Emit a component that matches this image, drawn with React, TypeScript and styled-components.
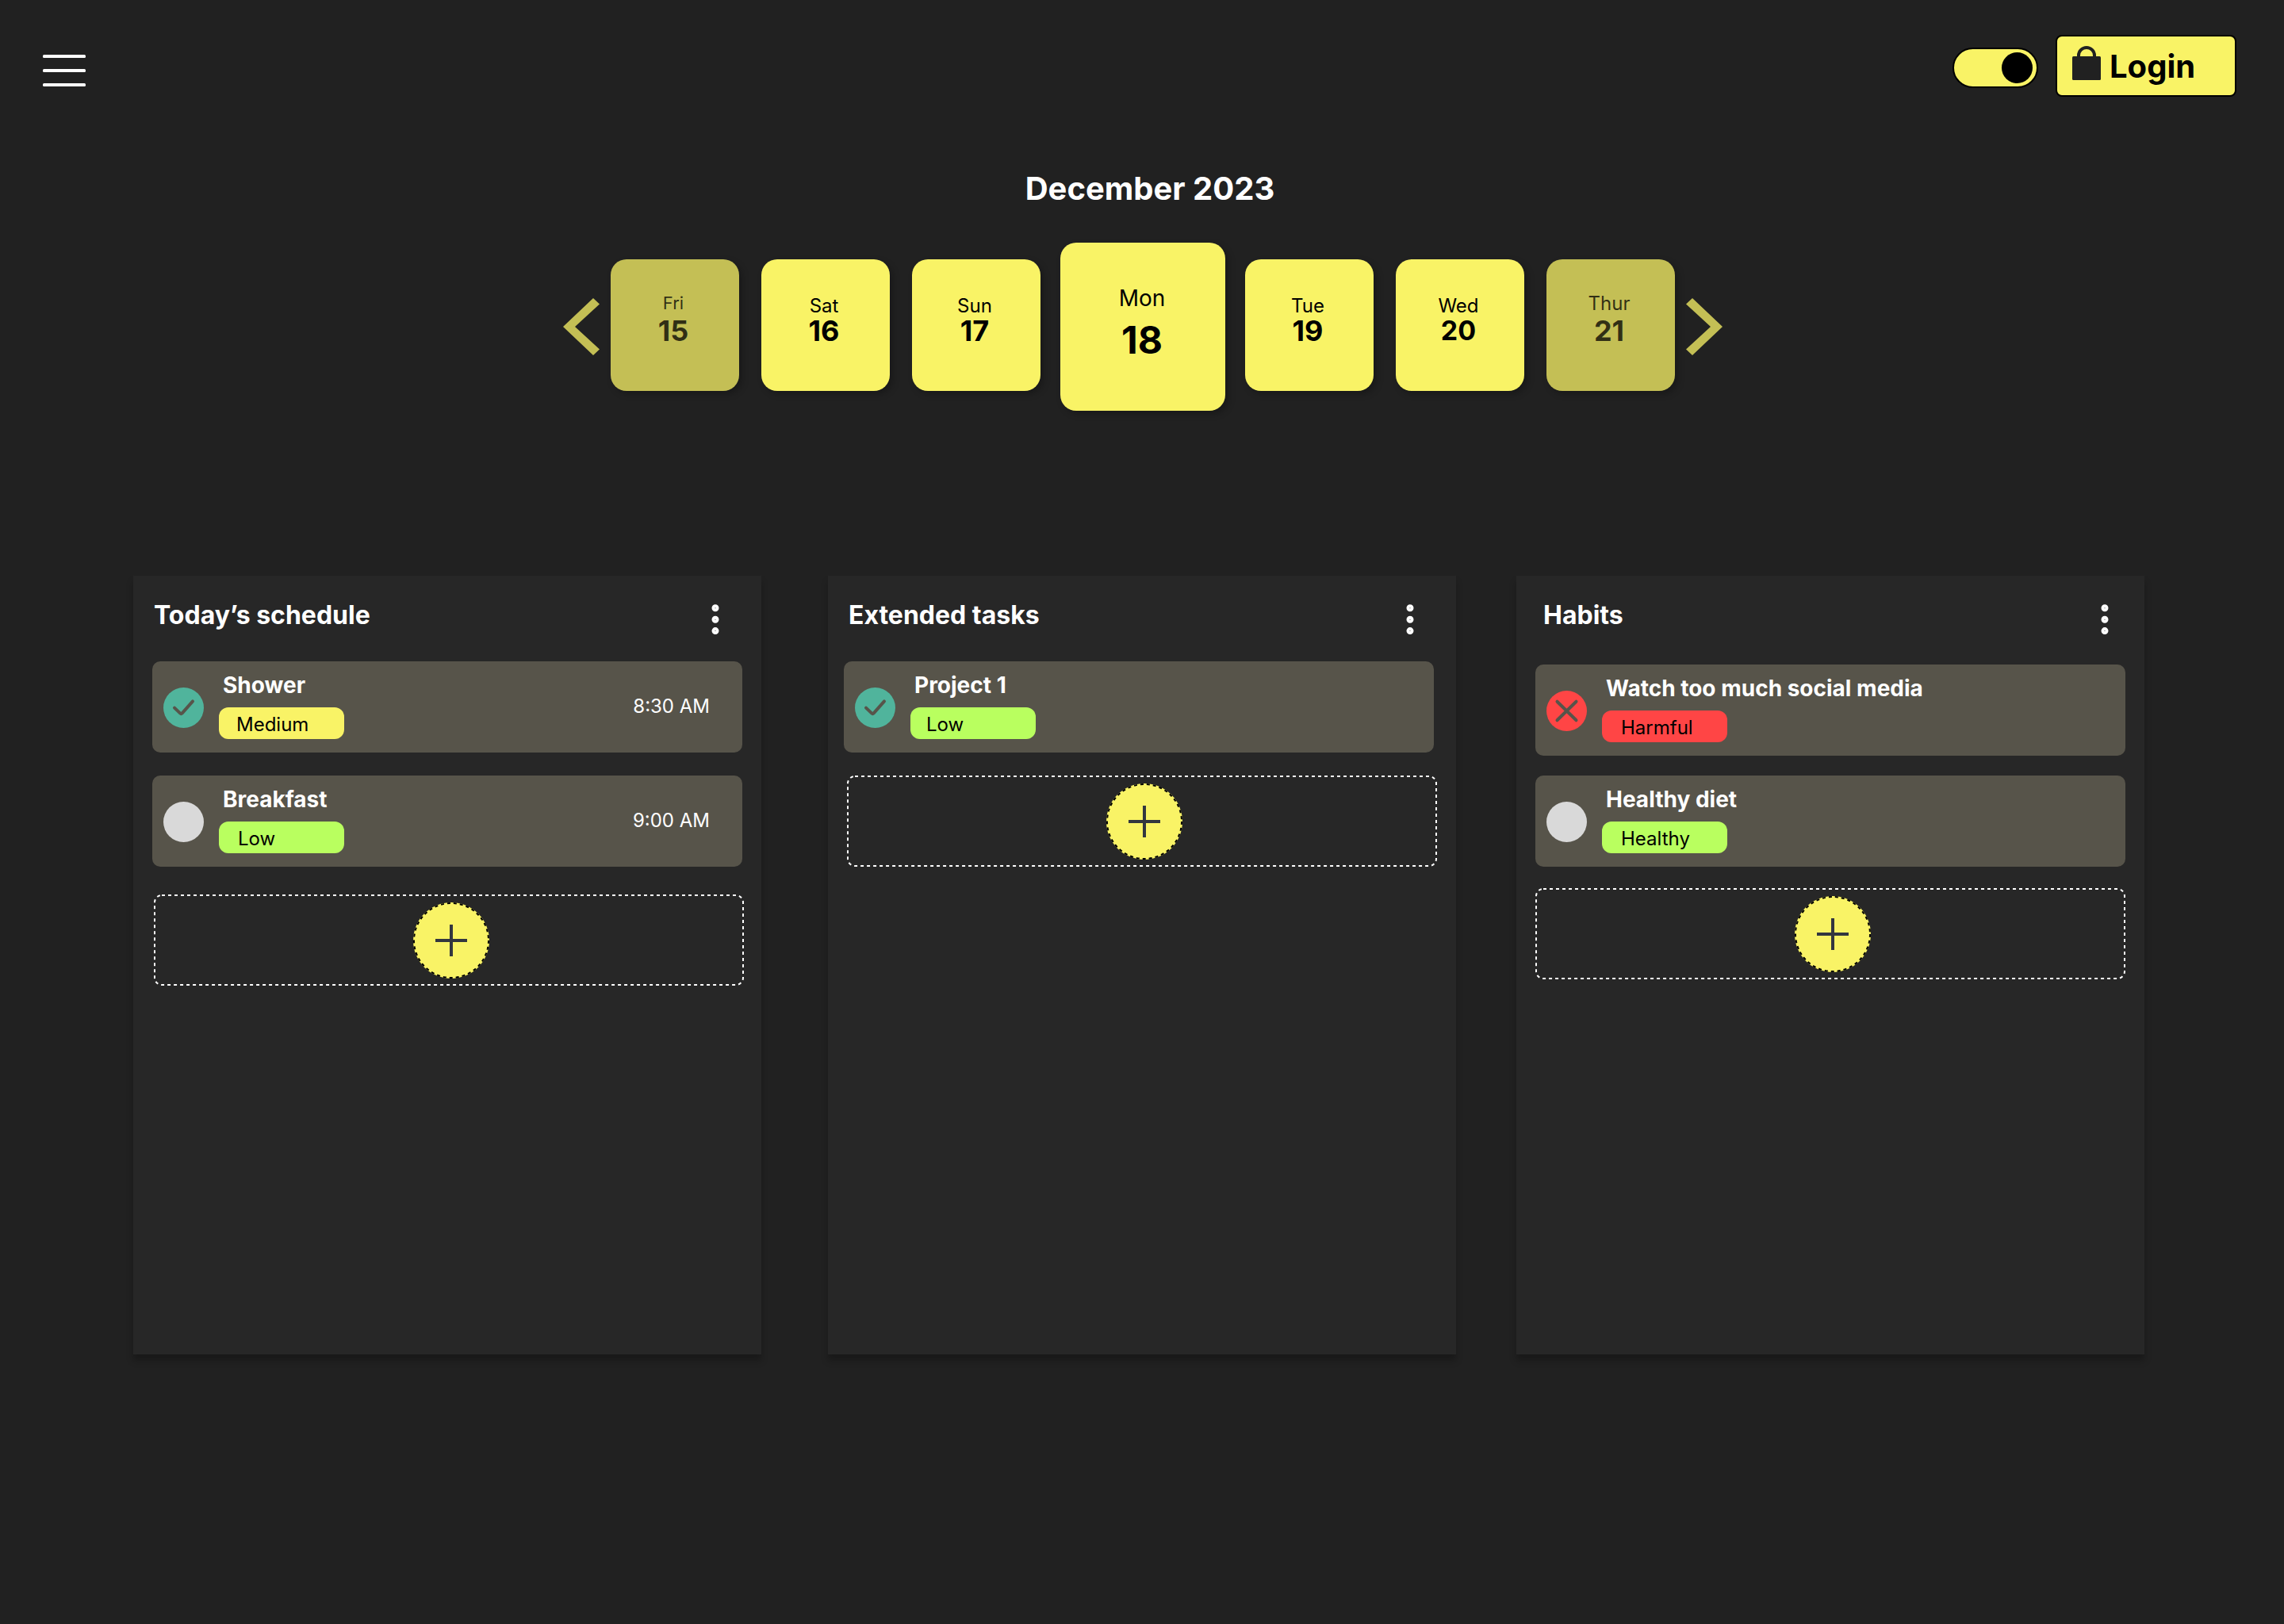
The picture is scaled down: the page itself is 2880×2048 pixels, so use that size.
import React, { useState } from "react";
import styled, { createGlobalStyle, css } from "styled-components";

const color = {
  page: "#212121",
  panel: "#272727",
  row: "#57544a",
  yellow: "#f9f366",
  mutedYellow: "#c4bf55",
  green: "#b9ff5f",
  red: "#ff4545",
  teal: "#50b49c",
  idle: "#d9d9d9",
  white: "#ffffff",
  black: "#000000",
  plus: "#33363f",
};

const GlobalStyle = createGlobalStyle`
  *, *::before, *::after { box-sizing: border-box; }
  body {
    margin: 0;
    background: ${color.page};
    color: ${color.white};
    font-family: Inter, "Liberation Sans", sans-serif;
  }
  button, input { font: inherit; }
  h1, h2, h3, p, ul { margin: 0; padding: 0; }
`;

const Page = styled.div`
  display: flex;
  flex-direction: column;
  min-height: 100vh;
  padding-bottom: 340px;
`;

const PlainButton = styled.button`
  display: flex;
  padding: 0;
  border: 0;
  background: none;
  color: inherit;
  cursor: pointer;
`;

/* ---------- top bar ---------- */

const TopBar = styled.header`
  display: flex;
  align-items: flex-start;
  justify-content: space-between;
  padding: 44px 60px 0 54px;
`;

const MenuButton = styled(PlainButton)`
  margin-top: 25px;
`;

const Actions = styled.div`
  display: flex;
  align-items: flex-start;
  gap: 22px;
`;

const Switch = styled.input`
  appearance: none;
  display: flex;
  align-items: center;
  width: 108px;
  height: 51px;
  margin: 16px 0 0;
  padding: 0 5px;
  border: 2px solid ${color.black};
  border-radius: 26px;
  background: ${color.yellow};
  cursor: pointer;

  &::before {
    content: "";
    width: 39px;
    height: 39px;
    border-radius: 50%;
    background: ${color.black};
  }

  &:checked {
    justify-content: flex-end;
  }
`;

const LoginButton = styled.button`
  display: flex;
  align-items: center;
  gap: 11px;
  width: 228px;
  height: 78px;
  padding: 2px 19px 0;
  border: 2px solid ${color.black};
  border-radius: 8px;
  background: ${color.yellow};
  color: ${color.black};
  font-size: 40px;
  font-weight: 700;
  line-height: 48px;
  cursor: pointer;

  svg {
    margin-bottom: 10px;
  }
`;

/* ---------- calendar ---------- */

const Calendar = styled.section`
  display: flex;
  flex-direction: column;
  align-items: center;
  gap: 44px;
  margin-top: 92px;
`;

const Month = styled.h1`
  padding-left: 20px;
  font-size: 40px;
  font-weight: 700;
  line-height: 48px;
`;

const Week = styled.div`
  display: flex;
  align-items: center;
  gap: 14px;
  padding-left: 2px;
`;

const Days = styled.div`
  display: flex;
  align-items: center;
  gap: 28px;
`;

const DayName = styled.span<{ $small?: boolean }>`
  font-size: ${(p) => (p.$small ? 22 : 24)}px;
  line-height: 29px;
`;

const DayNumber = styled.span<{ $small?: boolean }>`
  font-size: ${(p) => (p.$small ? 34 : 36)}px;
  font-weight: 700;
  line-height: 34px;
`;

type DayKind = "normal" | "muted" | "selected";

const DayCard = styled.button<{ $kind: DayKind }>`
  display: flex;
  flex-direction: column;
  align-items: center;
  justify-content: flex-start;
  width: 162px;
  height: 166px;
  margin: 0 0 4px;
  padding: 44px 4px 0 0;
  border: 0;
  border-radius: 20px;
  background: ${color.yellow};
  color: ${color.black};
  box-shadow: 4px 4px 8px rgba(0, 0, 0, 0.25);
  cursor: pointer;

  ${(p) =>
    p.$kind === "muted" &&
    css`
      gap: 3px;
      padding-top: 41px;
      background: ${color.mutedYellow};
      color: rgba(0, 0, 0, 0.75);
    `}

  ${(p) =>
    p.$kind === "selected" &&
    css`
      gap: 7px;
      width: 208px;
      height: 212px;
      margin: 0 -3px;
      padding: 53px 2px 0 0;

      ${DayName} {
        font-size: 28px;
        line-height: 34px;
      }
      ${DayNumber} {
        font-size: 48px;
        line-height: 58px;
      }
    `}
`;

/* ---------- board ---------- */

const Board = styled.main`
  display: flex;
  flex: 1;
  margin: 208px 176px 0 168px;
`;

const PanelBox = styled.section`
  flex: 1 1 0;
  min-width: 0;
  background: ${color.panel};
  box-shadow: 0 8px 8px rgba(0, 0, 0, 0.25);

  & + & {
    margin-left: 84px;
  }
  & + &:last-child {
    margin-left: 76px;
  }
`;

const PanelHeader = styled.header<{ $left: number; $right: number }>`
  display: flex;
  align-items: flex-start;
  justify-content: space-between;
  height: 108px;
  padding: 31px ${(p) => p.$right}px 0 ${(p) => p.$left}px;
`;

const PanelTitle = styled.h2`
  font-size: 32px;
  font-weight: 700;
  line-height: 38px;
`;

const KebabButton = styled(PlainButton)`
  margin-top: 4px;
`;

const List = styled.ul<{ $top: number; $gap: number; $left: number; $right: number }>`
  display: flex;
  flex-direction: column;
  gap: ${(p) => p.$gap}px;
  padding: ${(p) => p.$top}px ${(p) => p.$right}px 0 ${(p) => p.$left}px;
  list-style: none;
`;

const Row = styled.li`
  display: flex;
  align-items: flex-start;
  padding: 13px 41px 17px 14px;
  border-radius: 10px;
  background: ${color.row};
`;

const Status = styled.label`
  display: grid;
  width: 51px;
  height: 51px;
  margin-top: 20px;
  place-items: center;
  cursor: pointer;

  > * {
    grid-area: 1 / 1;
  }
  svg {
    pointer-events: none;
  }
`;

const StatusInput = styled.input<{ $tone: string }>`
  appearance: none;
  width: 51px;
  height: 51px;
  margin: 0;
  border-radius: 50%;
  background: ${color.idle};
  cursor: pointer;

  &:checked {
    background: ${(p) => p.$tone};
  }
`;

const Details = styled.div`
  display: flex;
  flex: 1;
  flex-direction: column;
  align-items: flex-start;
  gap: 11px;
  padding-left: 19px;
`;

const TaskName = styled.h3`
  padding-left: 5px;
  font-size: 28px;
  font-weight: 700;
  line-height: 34px;
`;

const Badge = styled.span<{ $tone: string; $inset: number }>`
  width: 158px;
  height: 40px;
  padding: 3px 12px 0 ${(p) => p.$inset}px;
  border-radius: 12px;
  background: ${(p) => p.$tone};
  color: ${color.black};
  font-size: 24px;
  line-height: 37px;
`;

const Time = styled.time`
  margin-top: 29px;
  font-size: 24px;
  line-height: 30px;
`;

const AddSlot = styled.div<{ $top: number; $left: number; $right: number }>`
  padding: ${(p) => p.$top}px ${(p) => p.$right}px 0 ${(p) => p.$left}px;
`;

const AddButton = styled.button`
  position: relative;
  display: flex;
  align-items: center;
  justify-content: center;
  width: 100%;
  height: 115px;
  padding: 0 0 0 5px;
  border: 0;
  background: none;
  cursor: pointer;
`;

const DashedOutline = styled.svg`
  position: absolute;
  inset: 0;
  width: 100%;
  height: 100%;
  overflow: visible;

  rect {
    width: calc(100% - 2px);
    height: calc(100% - 2px);
  }
`;

/* ---------- drawings ---------- */

const MenuIcon = () => (
  <svg width="54" height="40" viewBox="0 0 54 40" fill={color.white} aria-hidden="true">
    <rect width="54" height="4" rx="1.5" />
    <rect y="18" width="54" height="4" rx="1.5" />
    <rect y="36" width="54" height="4" rx="1.5" />
  </svg>
);

const LockIcon = () => (
  <svg width="36" height="43" viewBox="0 0 36 43" aria-hidden="true">
    <path d="M8 15V12a10 10 0 0 1 20 0v3" fill="none" stroke={color.page} strokeWidth="4" />
    <rect y="13" width="36" height="30" rx="1.5" fill={color.page} />
  </svg>
);

const Chevron = ({ flip }: { flip?: boolean }) => (
  <svg width="46" height="72" viewBox="0 0 46 72" fill={color.mutedYellow} aria-hidden="true">
    <path
      d={flip ? "M46 36 8 72 0 64.6 31 36 0 7.4 8 0Z" : "M0 36 38 0 46 7.4 15 36 46 64.6 38 72Z"}
    />
  </svg>
);

const KebabIcon = () => (
  <svg width="10" height="40" viewBox="0 0 10 40" fill="none" stroke={color.white} strokeWidth="4" aria-hidden="true">
    <circle cx="5" cy="5.8" r="2.5" />
    <circle cx="5" cy="20.2" r="2.5" />
    <circle cx="5" cy="34.6" r="2.5" />
  </svg>
);

const markProps = {
  width: 51,
  height: 51,
  viewBox: "0 0 51 51",
  fill: "none",
  stroke: color.row,
  strokeWidth: 4,
  strokeLinecap: "round" as const,
  strokeLinejoin: "round" as const,
  "aria-hidden": true,
};

const CheckMark = () => (
  <svg {...markProps}>
    <path d="M14 25.6 21.3 32.6Q22.4 33.7 23.5 32.6L37 17.4" />
  </svg>
);

const CrossMark = () => (
  <svg {...markProps}>
    <path d="M13.5 13.7 37.5 37.3M37.5 13.7 13.5 37.3" />
  </svg>
);

const PlusBadge = () => (
  <svg width="98" height="98" viewBox="0 0 98 98" aria-hidden="true">
    <circle cx="49" cy="49" r="48" fill={color.yellow} />
    <circle cx="49" cy="49" r="47" fill="none" stroke={color.black} strokeWidth="2" strokeDasharray="4 4" />
    <path d="M29 49H69M49 29V69" stroke={color.plus} strokeWidth="4" />
  </svg>
);

/* ---------- data ---------- */

type Task = {
  name: string;
  level: string;
  tone: string;
  inset: number;
  state: "done" | "failed" | "open";
  time?: string;
};

type PanelData = {
  title: string;
  header: [number, number];
  list: { top: number; gap: number; left: number; right: number };
  add: { top: number; left: number; right: number };
  tasks: Task[];
};

const days: { name: string; number: number; kind: DayKind }[] = [
  { name: "Fri", number: 15, kind: "muted" },
  { name: "Sat", number: 16, kind: "normal" },
  { name: "Sun", number: 17, kind: "normal" },
  { name: "Mon", number: 18, kind: "selected" },
  { name: "Tue", number: 19, kind: "normal" },
  { name: "Wed", number: 20, kind: "normal" },
  { name: "Thur", number: 21, kind: "muted" },
];

const panels: PanelData[] = [
  {
    title: "Today’s schedule",
    header: [26, 53],
    list: { top: 0, gap: 29, left: 24, right: 24 },
    add: { top: 35, left: 26, right: 22 },
    tasks: [
      { name: "Shower", level: "Medium", tone: color.yellow, inset: 22, state: "done", time: "8:30 AM" },
      { name: "Breakfast", level: "Low", tone: color.green, inset: 24, state: "open", time: "9:00 AM" },
    ],
  },
  {
    title: "Extended tasks",
    header: [26, 53],
    list: { top: 0, gap: 29, left: 20, right: 28 },
    add: { top: 29, left: 24, right: 24 },
    tasks: [{ name: "Project 1", level: "Low", tone: color.green, inset: 20, state: "done" }],
  },
  {
    title: "Habits",
    header: [34, 45],
    list: { top: 4, gap: 25, left: 24, right: 24 },
    add: { top: 27, left: 24, right: 24 },
    tasks: [
      { name: "Watch too much social media", level: "Harmful", tone: color.red, inset: 24, state: "failed" },
      { name: "Healthy diet", level: "Healthy", tone: color.green, inset: 24, state: "open" },
    ],
  },
];

function TaskRow({ task }: { task: Task }) {
  const [checked, setChecked] = useState(task.state !== "open");
  const failed = task.state === "failed";
  return (
    <Row>
      <Status>
        <StatusInput
          type="checkbox"
          aria-label={task.name}
          $tone={failed ? color.red : color.teal}
          checked={checked}
          onChange={(e) => setChecked(e.target.checked)}
        />
        {checked && (failed ? <CrossMark /> : <CheckMark />)}
      </Status>
      <Details>
        <TaskName>{task.name}</TaskName>
        <Badge $tone={task.tone} $inset={task.inset}>
          {task.level}
        </Badge>
      </Details>
      {task.time && <Time>{task.time}</Time>}
    </Row>
  );
}

function Panel({ data }: { data: PanelData }) {
  const { list, add } = data;
  return (
    <PanelBox>
      <PanelHeader $left={data.header[0]} $right={data.header[1]}>
        <PanelTitle>{data.title}</PanelTitle>
        <KebabButton type="button" aria-label={`${data.title} options`}>
          <KebabIcon />
        </KebabButton>
      </PanelHeader>
      <List $top={list.top} $gap={list.gap} $left={list.left} $right={list.right}>
        {data.tasks.map((task) => (
          <TaskRow key={task.name} task={task} />
        ))}
      </List>
      <AddSlot $top={add.top} $left={add.left} $right={add.right}>
        <AddButton type="button" aria-label={`Add to ${data.title}`}>
          <DashedOutline aria-hidden="true">
            <rect x="1" y="1" rx="9" fill="none" stroke={color.white} strokeWidth="2" strokeDasharray="4 4" />
          </DashedOutline>
          <PlusBadge />
        </AddButton>
      </AddSlot>
    </PanelBox>
  );
}

export default function App() {
  const [dark, setDark] = useState(true);
  return (
    <>
      <GlobalStyle />
      <Page>
        <TopBar>
          <MenuButton type="button" aria-label="Menu">
            <MenuIcon />
          </MenuButton>
          <Actions>
            <Switch
              type="checkbox"
              role="switch"
              aria-label="Dark mode"
              checked={dark}
              onChange={(e) => setDark(e.target.checked)}
            />
            <LoginButton type="button">
              <LockIcon />
              Login
            </LoginButton>
          </Actions>
        </TopBar>

        <Calendar>
          <Month>December 2023</Month>
          <Week>
            <PlainButton type="button" aria-label="Previous days">
              <Chevron />
            </PlainButton>
            <Days>
              {days.map((day) => (
                <DayCard key={day.number} type="button" $kind={day.kind}>
                  <DayName $small={day.name === "Fri"}>{day.name}</DayName>
                  <DayNumber $small={day.number === 20}>{day.number}</DayNumber>
                </DayCard>
              ))}
            </Days>
            <PlainButton type="button" aria-label="Next days">
              <Chevron flip />
            </PlainButton>
          </Week>
        </Calendar>

        <Board>
          {panels.map((panel) => (
            <Panel key={panel.title} data={panel} />
          ))}
        </Board>
      </Page>
    </>
  );
}
